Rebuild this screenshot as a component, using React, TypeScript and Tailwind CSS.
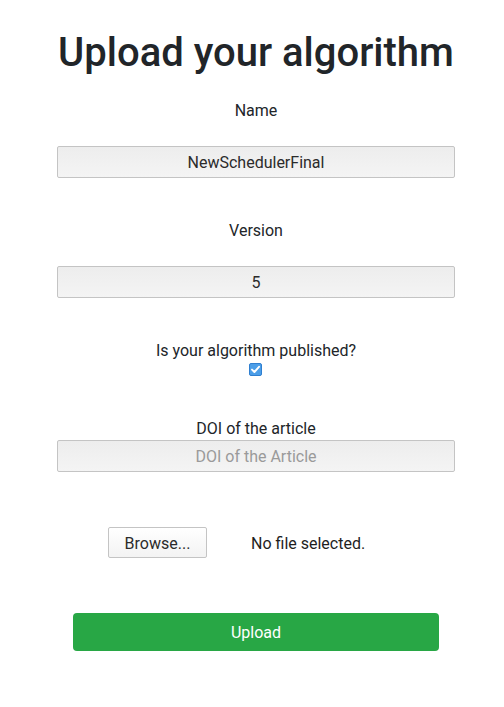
import React from "react";

const font = { fontFamily: "Roboto, 'Noto Sans', sans-serif" };

function Field({ value, placeholder }: { value?: string; placeholder?: string }) {
  return (
    <div className="mx-[49px] h-[32px] rounded-[2px] border border-[#c4c4c4] bg-gradient-to-b from-[#ededed] to-[#f4f4f4] flex items-center justify-center pt-[2px] text-[16px] leading-[24px]">
      {value ? (
        <span className="text-[#2b2b2b]">{value}</span>
      ) : (
        <span className="text-[#9a9a9a]">{placeholder}</span>
      )}
    </div>
  );
}

export default function App() {
  return (
    <div className="min-h-[707px] w-[504px] bg-white pl-2 text-[#212529]" style={font}>
      <div className="flex flex-col">
        <h1 className="mt-[29px] h-[48px] text-center text-[40px] font-medium leading-[48px] text-[#212529]">
          Upload your algorithm
        </h1>
        <div className="mt-[22px] h-[24px] text-center text-[16px] leading-[24px]">Name</div>
        <div className="mt-[23px]">
          <Field value="NewSchedulerFinal" />
        </div>
        <div className="mt-[41px] h-[24px] text-center text-[16px] leading-[24px]">Version</div>
        <div className="mt-[23px]">
          <Field value="5" />
        </div>
        <div className="mt-[41px] h-[24px] text-center text-[16px] leading-[24px]">
          Is your algorithm published?
        </div>
        <div className="flex justify-center">
          <span className="ml-[-1px] flex h-[13px] w-[13px] items-center justify-center rounded-[2px] border border-[#2f7fd0] bg-[#4c9ee8]">
            <svg width="11" height="11" viewBox="0 0 11 11">
              <path d="M2 5.6 L4.4 8 L9 2.8" fill="none" stroke="white" strokeWidth="1.9" strokeLinecap="round" strokeLinejoin="round" />
            </svg>
          </span>
        </div>
        <div className="mt-[40px] h-[24px] pt-[1px] text-center text-[16px] leading-[24px]">DOI of the article</div>
        <div>
          <Field placeholder="DOI of the Article" />
        </div>
        <div className="mt-[55px] flex items-center pl-[100px]">
          <div className="flex h-[31px] w-[99px] items-center justify-center rounded-[2px] border border-[#c4c4c4] bg-gradient-to-b from-[#ffffff] to-[#f3f3f3] pt-[2px] text-[16px] text-[#2b2b2b]">
            Browse...
          </div>
          <span className="ml-[44px] pt-[2px] text-[16px] text-[#1e1e1e]">No file selected.</span>
        </div>
        <div className="mx-[65px] mt-[55px] flex h-[38px] items-center justify-center rounded-[4px] bg-[#28a745] pt-[2px] text-[16px] text-white">
          Upload
        </div>
      </div>
    </div>
  );
}
